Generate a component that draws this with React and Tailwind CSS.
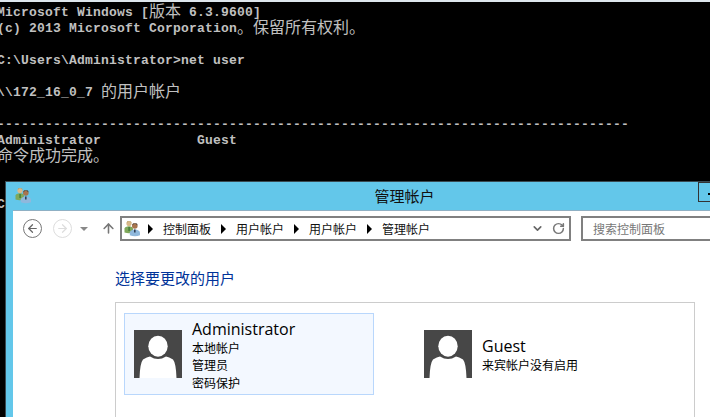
import { ChevronDown, RotateCw, ArrowUp, ArrowLeft, ArrowRight } from "lucide-react";

const cjk = "font-['Noto_Sans_CJK_SC'] font-normal text-[16px] inline-block w-[16px] h-4 leading-[10px] align-top text-center";

function Zh({ text }) {
  return (
    <>
      {[...text].map((ch, i) => (
        <span key={i} className={cjk}>
          {ch}
        </span>
      ))}
    </>
  );
}

function Row({ children }) {
  return <div className="h-4 leading-4 whitespace-pre">{children || " "}</div>;
}

function UsersIcon() {
  return (
    <svg width="17" height="17" viewBox="0 0 17 17" className="shrink-0">
      <circle cx="5" cy="3.6" r="2.6" fill="#d9b98a" />
      <path d="M2.6 3.2 Q5 -0.4 7.6 3 L7 1.4 L3.4 1.2 Z" fill="#a98c4e" />
      <path d="M0.5 12.5 V8.5 Q1 6.4 5 6.2 Q8.5 6.4 9 8.5 V12.5 Q5 14 0.5 12.5Z" fill="#7fa85a" />
      <path d="M4.4 7 H5.8 V11 H4.4Z" fill="#3f7a3a" />
      <circle cx="10.8" cy="6" r="2.8" fill="#a8744e" />
      <path d="M8 5.6 Q10.8 1.8 13.6 5.4 L13 3.6 L9 3.4 Z" fill="#3d332c" />
      <path d="M5.8 15.2 V12.6 Q6.4 9.6 10.8 9.4 Q15.4 9.6 16 12.6 V15.2 Q11 17.2 5.8 15.2Z" fill="#8fb8dc" />
      <path d="M10 9.6 H11.6 V12.6 H10Z" fill="#2f3f55" />
    </svg>
  );
}

function Avatar() {
  return (
    <svg width="48" height="48" viewBox="0 0 48 48" className="shrink-0">
      <rect width="48" height="48" fill="#474747" />
      <ellipse cx="24" cy="16.2" rx="9.7" ry="10.5" fill="#fff" />
      <path
        d="M5.5 48 Q6 33 9 29.5 Q13 27 16 26.5 Q24 31.5 32 26.5 Q35 27 39 29.5 Q42 33 42.5 48 Z"
        fill="#fff"
      />
    </svg>
  );
}

function Arrow() {
  return <span className="w-0 h-0 border-y-[5px] border-y-transparent border-l-[5px] border-l-black shrink-0" />;
}

const crumbs = ["控制面板", "用户帐户", "用户帐户", "管理帐户"];

export default function App() {
  return (
    <div className="relative w-[710px] h-[417px] overflow-hidden bg-black font-['Noto_Sans_CJK_SC',sans-serif]">
      <div className="h-[2px] bg-[#dde6ec]" />
      {/* console */}
      <div className="ml-[-3px] pt-[3px] font-['Liberation_Mono',monospace] font-bold text-[13px] tracking-[0.2px] text-[#c0c0c0]">
        <Row>
          Microsoft Windows [<Zh text="版本" /> 6.3.9600]
        </Row>
        <Row>
          (c) 2013 Microsoft Corporation<Zh text="。保留所有权利。" />
        </Row>
        <Row />
        <Row>C:\Users\Administrator&gt;net user</Row>
        <Row />
        <Row>
          \\172_16_0_7 <Zh text="的用户帐户" />
        </Row>
        <Row />
        <Row>{"-".repeat(79)}</Row>
        <Row>Administrator            Guest</Row>
        <Row>
          <Zh text="命令成功完成。" />
        </Row>
        <Row />
        <Row />
        <Row>C:\Users\Administrator&gt;</Row>
      </div>

      {/* control panel window */}
      <div className="absolute left-[5px] top-[181px] w-[800px] h-[300px] border-l border-t border-[#3a4a52] bg-[#63c7ea] flex flex-col">
        <div className="relative h-[28px] shrink-0 flex items-center justify-center">
          <div className="absolute left-[9px] top-[5px]">
            <UsersIcon />
          </div>
          <span className="text-[15px] leading-[26px] text-[#111] ml-[-2px]">管理帐户</span>
          <div className="absolute left-[692px] top-0 w-[30px] h-[20px] border border-[#333]">
            <span className="absolute left-[9px] top-[10px] w-[8px] h-[2px] bg-black" />
          </div>
        </div>
        <div className="ml-[7px] flex-1 bg-white border-t border-[#8fb0c4]">
          {/* toolbar */}
          <div className="flex items-center h-[25px] mt-[5px]">
            <div className="w-[19px] h-[19px] ml-[10px] rounded-full border border-[#777] flex items-center justify-center shrink-0">
              <ArrowLeft size={13} color="#666" strokeWidth={2.25} />
            </div>
            <div className="w-[19px] h-[19px] ml-[11px] rounded-full border border-[#ddd] flex items-center justify-center shrink-0">
              <ArrowRight size={13} color="#ddd" strokeWidth={2.25} />
            </div>
            <span className="ml-[8px] w-0 h-0 border-x-[4px] border-x-transparent border-t-[4px] border-t-[#888] shrink-0" />
            <ArrowUp size={15} color="#777" strokeWidth={2.5} className="ml-[13px] shrink-0" />
            <div className="ml-[4px] w-[451px] h-[25px] border-2 border-[#808080] flex items-center pl-[2px] shrink-0">
              <UsersIcon />
              <div className="flex items-center ml-[7px] gap-[10px] text-[12px] text-[#111]">
                {crumbs.map((c, i) => (
                  <div key={i} className="flex items-center gap-[10px]">
                    <Arrow />
                    <span className="w-[48px]">{c}</span>
                  </div>
                ))}
              </div>
              <ChevronDown size={13} color="#666" strokeWidth={3} className="ml-auto mr-[8px]" />
              <RotateCw size={13} color="#777" strokeWidth={2.75} className="mr-[4px]" />
            </div>
            <div className="ml-[10px] w-[140px] h-[25px] border-2 border-[#808080] flex items-center pl-[10px] text-[12px] text-[#777] shrink-0">
              搜索控制面板
            </div>
          </div>

          {/* content */}
          <div className="pl-[102px]">
            <div className="mt-[26px] text-[15px] leading-[22px] text-[#003399]">选择要更改的用户</div>
            <div className="mt-[13px] w-[580px] h-[200px] border border-[#cccccc] pl-[8px] pt-[10px] flex items-start">
              <div className="w-[250px] h-[82px] bg-[#f3f8ff] border border-[#b9d7fc] flex items-center pl-[9px]">
                <Avatar />
                <div className="ml-[10px] mt-[2px]">
                  <div className="font-['Open_Sans',sans-serif] text-[16px] leading-[20px] text-black">Administrator</div>
                  <div className="text-[12px] leading-[17.5px] text-black">本地帐户</div>
                  <div className="text-[12px] leading-[17.5px] text-black">管理员</div>
                  <div className="text-[12px] leading-[17.5px] text-black">密码保护</div>
                </div>
              </div>
              <div className="ml-[50px] h-[82px] flex items-center">
                <Avatar />
                <div className="ml-[10px] mt-[1px]">
                  <div className="font-['Open_Sans',sans-serif] text-[16px] leading-[20px] text-black">Guest</div>
                  <div className="text-[12px] leading-[17.5px] text-black">来宾帐户没有启用</div>
                </div>
              </div>
            </div>
          </div>
        </div>
      </div>
    </div>
  );
}
